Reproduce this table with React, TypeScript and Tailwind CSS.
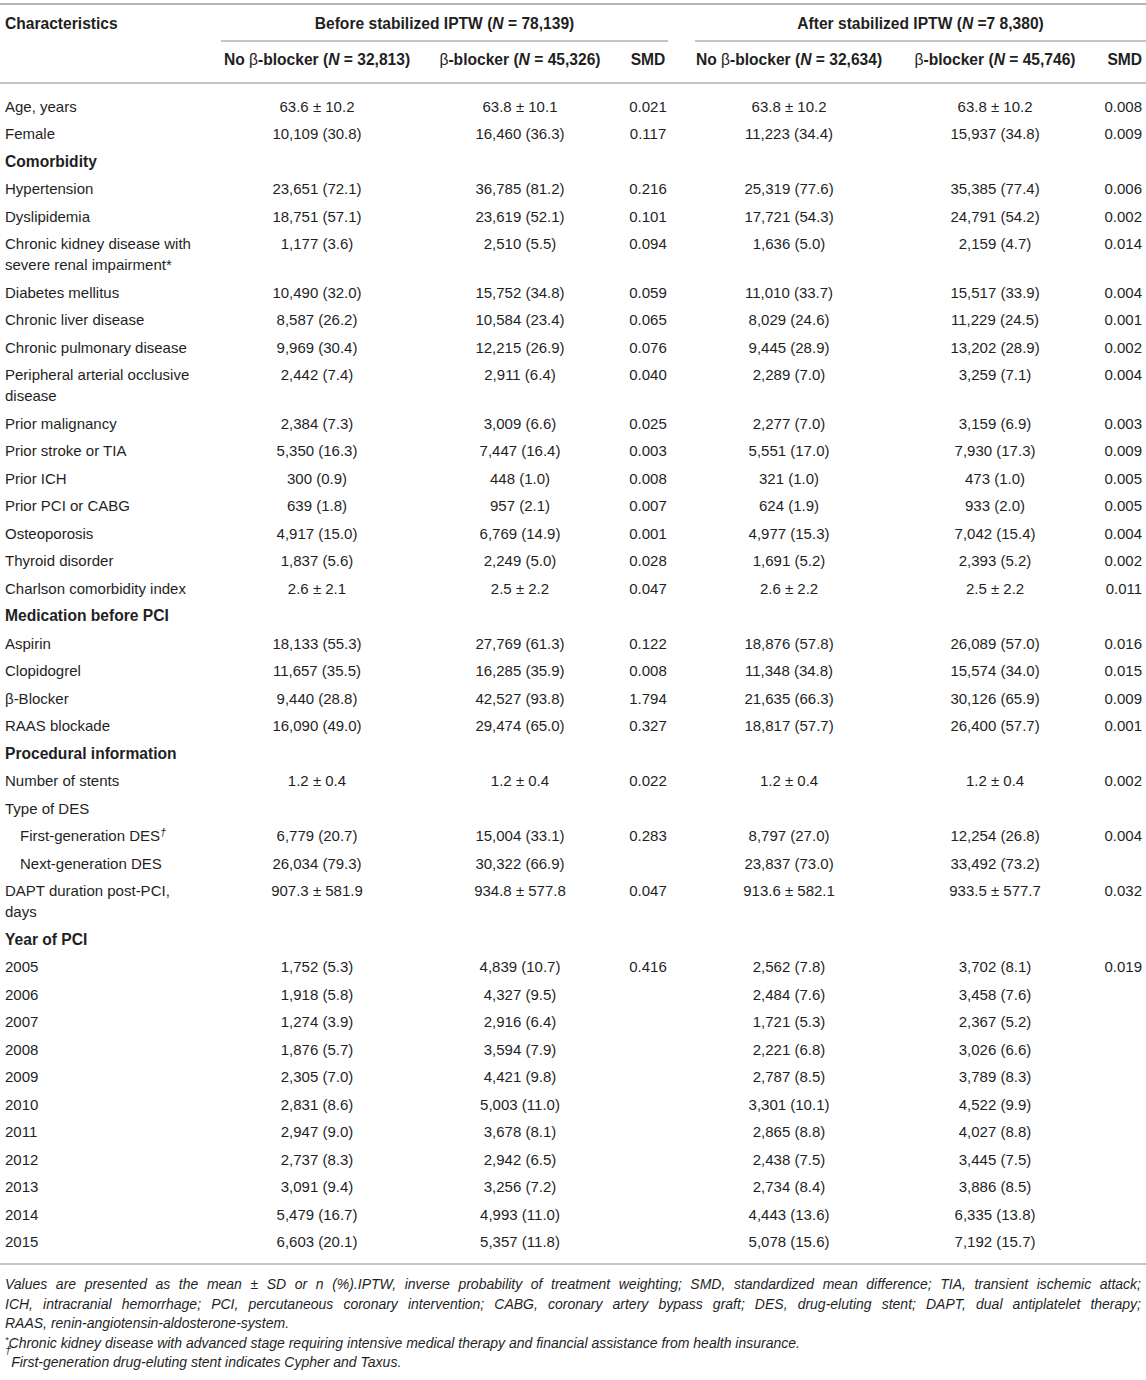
import React from 'react';

type Row = {
  label: React.ReactNode;
  kind?: 'section' | 'indent';
  v?: [string, string, string, string, string, string];
};

const rows: Row[] = [
  { label: 'Age, years', v: ['63.6 ± 10.2', '63.8 ± 10.1', '0.021', '63.8 ± 10.2', '63.8 ± 10.2', '0.008'] },
  { label: 'Female', v: ['10,109 (30.8)', '16,460 (36.3)', '0.117', '11,223 (34.4)', '15,937 (34.8)', '0.009'] },
  { label: 'Comorbidity', kind: 'section' },
  { label: 'Hypertension', v: ['23,651 (72.1)', '36,785 (81.2)', '0.216', '25,319 (77.6)', '35,385 (77.4)', '0.006'] },
  { label: 'Dyslipidemia', v: ['18,751 (57.1)', '23,619 (52.1)', '0.101', '17,721 (54.3)', '24,791 (54.2)', '0.002'] },
  { label: 'Chronic kidney disease with severe renal impairment*', v: ['1,177 (3.6)', '2,510 (5.5)', '0.094', '1,636 (5.0)', '2,159 (4.7)', '0.014'] },
  { label: 'Diabetes mellitus', v: ['10,490 (32.0)', '15,752 (34.8)', '0.059', '11,010 (33.7)', '15,517 (33.9)', '0.004'] },
  { label: 'Chronic liver disease', v: ['8,587 (26.2)', '10,584 (23.4)', '0.065', '8,029 (24.6)', '11,229 (24.5)', '0.001'] },
  { label: 'Chronic pulmonary disease', v: ['9,969 (30.4)', '12,215 (26.9)', '0.076', '9,445 (28.9)', '13,202 (28.9)', '0.002'] },
  { label: 'Peripheral arterial occlusive disease', v: ['2,442 (7.4)', '2,911 (6.4)', '0.040', '2,289 (7.0)', '3,259 (7.1)', '0.004'] },
  { label: 'Prior malignancy', v: ['2,384 (7.3)', '3,009 (6.6)', '0.025', '2,277 (7.0)', '3,159 (6.9)', '0.003'] },
  { label: 'Prior stroke or TIA', v: ['5,350 (16.3)', '7,447 (16.4)', '0.003', '5,551 (17.0)', '7,930 (17.3)', '0.009'] },
  { label: 'Prior ICH', v: ['300 (0.9)', '448 (1.0)', '0.008', '321 (1.0)', '473 (1.0)', '0.005'] },
  { label: 'Prior PCI or CABG', v: ['639 (1.8)', '957 (2.1)', '0.007', '624 (1.9)', '933 (2.0)', '0.005'] },
  { label: 'Osteoporosis', v: ['4,917 (15.0)', '6,769 (14.9)', '0.001', '4,977 (15.3)', '7,042 (15.4)', '0.004'] },
  { label: 'Thyroid disorder', v: ['1,837 (5.6)', '2,249 (5.0)', '0.028', '1,691 (5.2)', '2,393 (5.2)', '0.002'] },
  { label: 'Charlson comorbidity index', v: ['2.6 ± 2.1', '2.5 ± 2.2', '0.047', '2.6 ± 2.2', '2.5 ± 2.2', '0.011'] },
  { label: 'Medication before PCI', kind: 'section' },
  { label: 'Aspirin', v: ['18,133 (55.3)', '27,769 (61.3)', '0.122', '18,876 (57.8)', '26,089 (57.0)', '0.016'] },
  { label: 'Clopidogrel', v: ['11,657 (35.5)', '16,285 (35.9)', '0.008', '11,348 (34.8)', '15,574 (34.0)', '0.015'] },
  { label: 'β-Blocker', v: ['9,440 (28.8)', '42,527 (93.8)', '1.794', '21,635 (66.3)', '30,126 (65.9)', '0.009'] },
  { label: 'RAAS blockade', v: ['16,090 (49.0)', '29,474 (65.0)', '0.327', '18,817 (57.7)', '26,400 (57.7)', '0.001'] },
  { label: 'Procedural information', kind: 'section' },
  { label: 'Number of stents', v: ['1.2 ± 0.4', '1.2 ± 0.4', '0.022', '1.2 ± 0.4', '1.2 ± 0.4', '0.002'] },
  { label: 'Type of DES' },
  {
    label: (
      <>
        First-generation DES<sup className="text-[11px] italic">†</sup>
      </>
    ),
    kind: 'indent',
    v: ['6,779 (20.7)', '15,004 (33.1)', '0.283', '8,797 (27.0)', '12,254 (26.8)', '0.004'],
  },
  { label: 'Next-generation DES', kind: 'indent', v: ['26,034 (79.3)', '30,322 (66.9)', '', '23,837 (73.0)', '33,492 (73.2)', ''] },
  { label: 'DAPT duration post-PCI, days', v: ['907.3 ± 581.9', '934.8 ± 577.8', '0.047', '913.6 ± 582.1', '933.5 ± 577.7', '0.032'] },
  { label: 'Year of PCI', kind: 'section' },
  { label: '2005', v: ['1,752 (5.3)', '4,839 (10.7)', '0.416', '2,562 (7.8)', '3,702 (8.1)', '0.019'] },
  { label: '2006', v: ['1,918 (5.8)', '4,327 (9.5)', '', '2,484 (7.6)', '3,458 (7.6)', ''] },
  { label: '2007', v: ['1,274 (3.9)', '2,916 (6.4)', '', '1,721 (5.3)', '2,367 (5.2)', ''] },
  { label: '2008', v: ['1,876 (5.7)', '3,594 (7.9)', '', '2,221 (6.8)', '3,026 (6.6)', ''] },
  { label: '2009', v: ['2,305 (7.0)', '4,421 (9.8)', '', '2,787 (8.5)', '3,789 (8.3)', ''] },
  { label: '2010', v: ['2,831 (8.6)', '5,003 (11.0)', '', '3,301 (10.1)', '4,522 (9.9)', ''] },
  { label: '2011', v: ['2,947 (9.0)', '3,678 (8.1)', '', '2,865 (8.8)', '4,027 (8.8)', ''] },
  { label: '2012', v: ['2,737 (8.3)', '2,942 (6.5)', '', '2,438 (7.5)', '3,445 (7.5)', ''] },
  { label: '2013', v: ['3,091 (9.4)', '3,256 (7.2)', '', '2,734 (8.4)', '3,886 (8.5)', ''] },
  { label: '2014', v: ['5,479 (16.7)', '4,993 (11.0)', '', '4,443 (13.6)', '6,335 (13.8)', ''] },
  { label: '2015', v: ['6,603 (20.1)', '5,357 (11.8)', '', '5,078 (15.6)', '7,192 (15.7)', ''] },
];

const N = () => <span className="italic">N</span>;
const Beta = () => <span className="font-normal">β</span>;

function App() {
  return (
    <div className="w-[1146px] bg-white pt-[3px] text-[15px] leading-[21px] text-[#1f1f1f] font-['Liberation_Sans',Arial,sans-serif]">
      <table className="w-full table-fixed border-collapse">
        <colgroup>
          <col className="w-[200px]" />
          <col className="w-[234px]" />
          <col className="w-[172px]" />
          <col className="w-[84px]" />
          <col className="w-[198px]" />
          <col className="w-[214px]" />
          <col className="w-[44px]" />
        </colgroup>
        <thead className="font-bold text-[15.6px]">
          <tr className="border-t-2 border-[#b4b4b4]">
            <th className="pl-[5px] pt-[7.5px] pb-[8.5px] text-left align-top font-bold">Characteristics</th>
            <th colSpan={3} className="p-0 align-top font-bold">
              <div className="ml-[21px] mr-[22px] border-b-2 border-[#c4c4c4] pt-[7.5px] pb-[6.5px] text-center">
                Before stabilized IPTW (<N /> = 78,139)
              </div>
            </th>
            <th colSpan={3} className="p-0 align-top font-bold">
              <div className="ml-[5px] border-b-2 border-[#c4c4c4] pt-[7.5px] pb-[6.5px] text-center">
                After stabilized IPTW (<N /> =7 8,380)
              </div>
            </th>
          </tr>
          <tr className="border-b-2 border-[#c4c4c4]">
            <th className="pt-[6.5px] pb-[12.5px]" />
            <th className="pt-[6.5px] pb-[12.5px] text-center font-bold whitespace-nowrap">
              No <Beta />-blocker (<N /> = 32,813)
            </th>
            <th className="pt-[6.5px] pb-[12.5px] text-center font-bold whitespace-nowrap">
              <Beta />-blocker (<N /> = 45,326)
            </th>
            <th className="pt-[6.5px] pb-[12.5px] text-center font-bold">SMD</th>
            <th className="pt-[6.5px] pb-[12.5px] text-center font-bold whitespace-nowrap">
              No <Beta />-blocker (<N /> = 32,634)
            </th>
            <th className="pt-[6.5px] pb-[12.5px] text-center font-bold whitespace-nowrap">
              <Beta />-blocker (<N /> = 45,746)
            </th>
            <th className="pt-[6.5px] pb-[12.5px] text-right pr-[4px] font-bold">SMD</th>
          </tr>
        </thead>
        <tbody>
          {rows.map((r, i) => {
            const pad = i === 0 ? 'pt-[11.5px] pb-[3.25px]' : 'py-[3.25px]';
            return (
              <tr key={i} className="align-top">
                <td
                  className={`${pad} pr-[5px] ${r.kind === 'indent' ? 'pl-[20px]' : 'pl-[5px]'} ${
                    r.kind === 'section' ? 'font-bold text-[15.6px]' : ''
                  }`}
                >
                  {r.label}
                </td>
                {r.v ? (
                  <>
                    <td className={`${pad} text-center`}>{r.v[0]}</td>
                    <td className={`${pad} text-center`}>{r.v[1]}</td>
                    <td className={`${pad} text-center`}>{r.v[2]}</td>
                    <td className={`${pad} text-center`}>{r.v[3]}</td>
                    <td className={`${pad} text-center`}>{r.v[4]}</td>
                    <td className={`${pad} text-right pr-[4px]`}>{r.v[5]}</td>
                  </>
                ) : (
                  <td colSpan={6} className={pad} />
                )}
              </tr>
            );
          })}
          <tr className="border-b-2 border-[#c4c4c4]">
            <td colSpan={7} className="h-[9px] p-0" />
          </tr>
        </tbody>
      </table>

      <div className="px-[5px] pt-[10px] text-[14px] leading-[19.5px] italic">
        <p className="text-justify [text-align-last:justify]">
          Values are presented as the mean ± SD or n (%).IPTW, inverse probability of treatment weighting; SMD, standardized mean difference; TIA, transient ischemic attack;
        </p>
        <p className="text-justify [text-align-last:justify]">
          ICH, intracranial hemorrhage; PCI, percutaneous coronary intervention; CABG, coronary artery bypass graft; DES, drug-eluting stent; DAPT, dual antiplatelet therapy;
        </p>
        <p>RAAS, renin-angiotensin-aldosterone-system.</p>
        <p>
          <sup className="text-[9px]">*</sup>Chronic kidney disease with advanced stage requiring intensive medical therapy and financial assistance from health insurance.
        </p>
        <p>
          <sup className="text-[11px] align-[0.75em]">†</sup>First-generation drug-eluting stent indicates Cypher and Taxus.
        </p>
      </div>
    </div>
  );
}

export default App;
